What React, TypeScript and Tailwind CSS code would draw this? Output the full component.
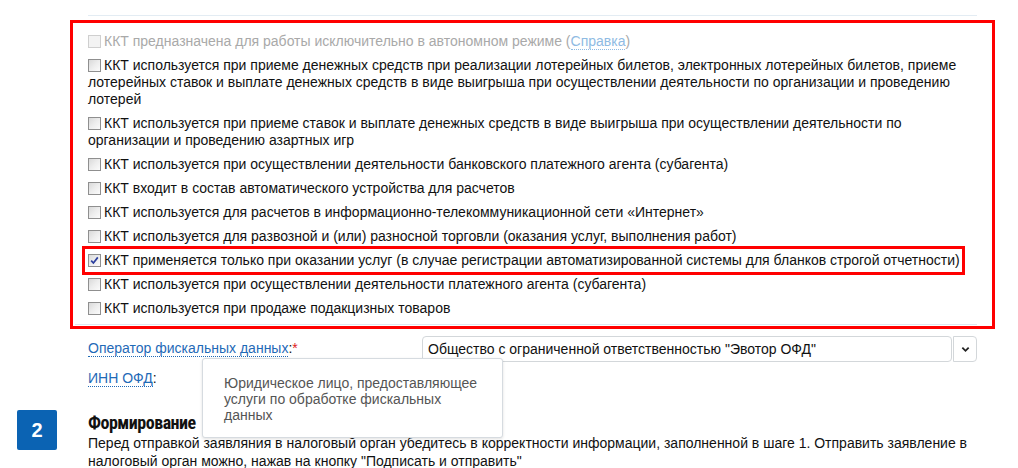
import React from "react";

function Box({ checked, disabled }: { checked?: boolean; disabled?: boolean }) {
  return (
    <span
      className={`relative inline-block align-[-2px] w-[13px] h-[13px] mr-[3px] border ${
        disabled
          ? "border-[#cfcfcf] bg-[#f3f3f3]"
          : "border-[#8f8f8f] bg-gradient-to-br from-[#d9d9d9] via-[#ededed] to-[#fbfbfb]"
      }`}
    >
      {checked && (
        <svg viewBox="0 0 11 11" className="absolute left-0 top-0 w-[11px] h-[11px]">
          <path d="M2.2 5.6 L4.4 8 L8.8 2.4" fill="none" stroke="#2b3f9e" strokeWidth="1.7" />
        </svg>
      )}
    </span>
  );
}

const items: React.ReactNode[] = [
  "ККТ используется при приеме денежных средств при реализации лотерейных билетов, электронных лотерейных билетов, приеме лотерейных ставок и выплате денежных средств в виде выигрыша при осуществлении деятельности по организации и проведению лотерей",
  <>
    ККТ используется при приеме ставок и выплате денежных средств в виде выигрыша при осуществлении деятельности по
    <br />
    организации и проведению азартных игр
  </>,
  "ККТ используется при осуществлении деятельности банковского платежного агента (субагента)",
  "ККТ входит в состав автоматического устройства для расчетов",
  "ККТ используется для расчетов в информационно-телекоммуникационной сети «Интернет»",
  "ККТ используется для развозной и (или) разносной торговли (оказания услуг, выполнения работ)",
];

const itemsAfter = [
  "ККТ используется при осуществлении деятельности платежного агента (субагента)",
  "ККТ используется при продаже подакцизных товаров",
];

export default function App() {
  return (
    <div className="relative w-[1018px] h-[468px] overflow-hidden bg-white text-[14px] leading-[17px] text-[#111] font-['Liberation_Sans',Arial,sans-serif]">
      <div className="pt-[15px]">
        <div className="ml-[88px] w-[889px] h-px bg-[#e3ecf3]" />
      </div>

      {/* options block */}
      <div className="mt-[4px] ml-[70px] w-[925px] h-[309px] border-[3px] border-[#ff0000] flex flex-col">
        <div className="pl-[15px] pr-[2px] pt-[10px] flex flex-col gap-[7px]">
          <div className="text-[#a9a9a9]">
            <Box disabled />
            ККТ предназначена для работы исключительно в автономном режиме (
            <span className="text-[#8fbbe3] border-b border-dotted border-[#8fbbe3]">Справка</span>)
          </div>
          {items.map((t, i) => (
            <div key={i}>
              <Box />
              {t}
            </div>
          ))}
          <div className="-ml-[6px] -my-[6px] w-fit border-[3px] border-[#ff0000] pl-[3px] pr-[2px] py-[3px]">
            <Box checked />
            ККТ применяется только при оказании услуг (в случае регистрации автоматизированной системы для бланков строгой отчетности)
          </div>
          {itemsAfter.map((t) => (
            <div key={t}>
              <Box />
              {t}
            </div>
          ))}
        </div>
        <div className="mt-auto mb-[1px] ml-[2px] w-[902px] h-px bg-[#dde8f0]" />
      </div>

      {/* fiscal operator */}
      <div className="mt-[7px] flex items-start">
        <div className="ml-[88px] w-[334px] pt-[4px]">
          <span className="text-[#1f6ab7] border-b border-dotted border-[#1f6ab7]">Оператор фискальных данных</span>
          :<span className="text-[#e0201b]">*</span>
        </div>
        <div className="w-[530px] h-[26px] border border-[#d3d7da] rounded-[4px] pl-[5px] flex items-center">
          Общество с ограниченной ответственностью "Эвотор ОФД"
        </div>
        <div className="ml-[1px] w-[24px] h-[26px] border border-[#d3d7da] rounded-r-[4px] flex items-center justify-center">
          <svg viewBox="0 0 10 10" className="w-[9px] h-[9px]">
            <path d="M1.5 3 L5 6.5 L8.5 3" fill="none" stroke="#222" strokeWidth="2" />
          </svg>
        </div>
      </div>

      <div className="mt-[8px] flex items-start">
        <div className="ml-[88px] w-[335px]">
          <span className="text-[#1f6ab7] border-b border-dotted border-[#1f6ab7]">ИНН ОФД</span>:
        </div>
        <div className="w-[80px] h-[26px] border border-[#d3d7da] rounded-[4px]" />
      </div>

      {/* step 2 */}
      <div className="mt-[14px] flex items-start">
        <div className="ml-[17px] w-[40px] h-[40px] rounded-[2px] bg-[#0b63b3] text-white text-[20px] font-bold flex items-center justify-center">
          2
        </div>
        <div className="ml-[31px] w-[900px]">
          <div className="pt-[2px] text-[18px] leading-[22px] font-bold tracking-[-0.5px] text-[#111] font-['Roboto_Condensed',Roboto,sans-serif]">
            Формирование
          </div>
          <div className="leading-[18px]">
            Перед отправкой заявляния в налоговый орган убедитесь в корректности информации, заполненной в шаге 1. Отправить заявление в налоговый орган можно, нажав на кнопку "Подписать и отправить"
          </div>
        </div>
      </div>

      {/* tooltip */}
      <div className="absolute left-[202px] top-[358px] w-[301px] h-[80px] bg-white border border-[#d6dbe0] rounded-[3px] shadow-[0_1px_3px_rgba(0,0,0,0.12)] pl-[21px] pt-[16px] pr-[10px] text-[#555] leading-[16px]">
        Юридическое лицо, предоставляющее услуги по обработке фискальных данных
      </div>
    </div>
  );
}
